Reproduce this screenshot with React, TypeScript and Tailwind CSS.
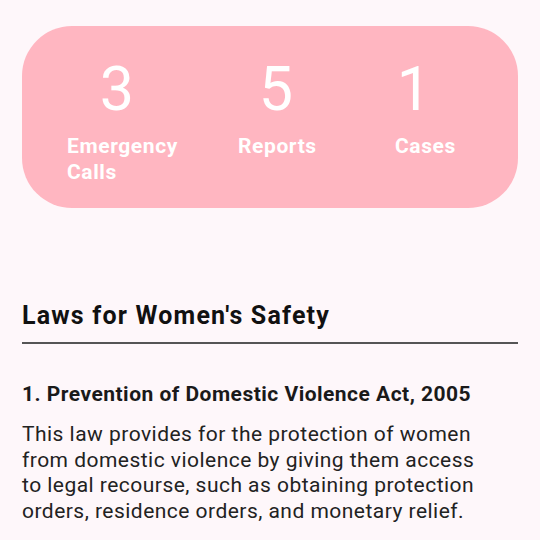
export default function App() {
  return (
    <div
      className="w-[540px] h-[540px] overflow-hidden bg-[#fef7fa]"
      style={{ fontFamily: 'Roboto, "Noto Sans", sans-serif' }}
    >
      <div className="px-[22px] pt-[26px]">
        <div className="h-[182px] rounded-[50px] bg-[#ffb6c1] pl-[45px] pt-[28px] flex items-start text-white">
          <div className="w-[120px] flex flex-col">
            <div className="w-[100px] text-center text-[61px] leading-[70px] font-normal">3</div>
            <div className="mt-[9px] text-[21px] leading-[26px] font-bold tracking-[0.6px] text-left">
              Emergency Calls
            </div>
          </div>
          <div className="ml-[51px] w-[80px] flex flex-col">
            <div className="w-[76px] text-center text-[61px] leading-[70px] font-normal">5</div>
            <div className="mt-[9px] text-[21px] leading-[26px] font-bold tracking-[0.6px] whitespace-nowrap">
              Reports
            </div>
          </div>
          <div className="ml-[77px] w-[70px] flex flex-col">
            <div className="w-[38px] text-center text-[61px] leading-[70px] font-normal">1</div>
            <div className="mt-[9px] text-[21px] leading-[26px] font-bold tracking-[0.6px] whitespace-nowrap">
              Cases
            </div>
          </div>
        </div>
        <div className="mt-[94px] text-[25px] leading-[28px] font-bold tracking-[1.2px] text-[#111]">
          Laws for Women's Safety
        </div>
        <div className="mt-[12px] h-[2px] bg-[#555]" />
        <div className="mt-[37px] text-[21px] leading-[26px] font-bold tracking-[0.48px] text-[#1a1a1a]">
          1. Prevention of Domestic Violence Act, 2005
        </div>
        <p className="mt-[15px] w-[468px] text-[21px] leading-[25.7px] tracking-[0.47px] text-[#222]">
          This law provides for the protection of women from domestic violence by giving them access
          to legal recourse, such as obtaining protection orders, residence orders, and monetary relief.
        </p>
      </div>
    </div>
  );
}
